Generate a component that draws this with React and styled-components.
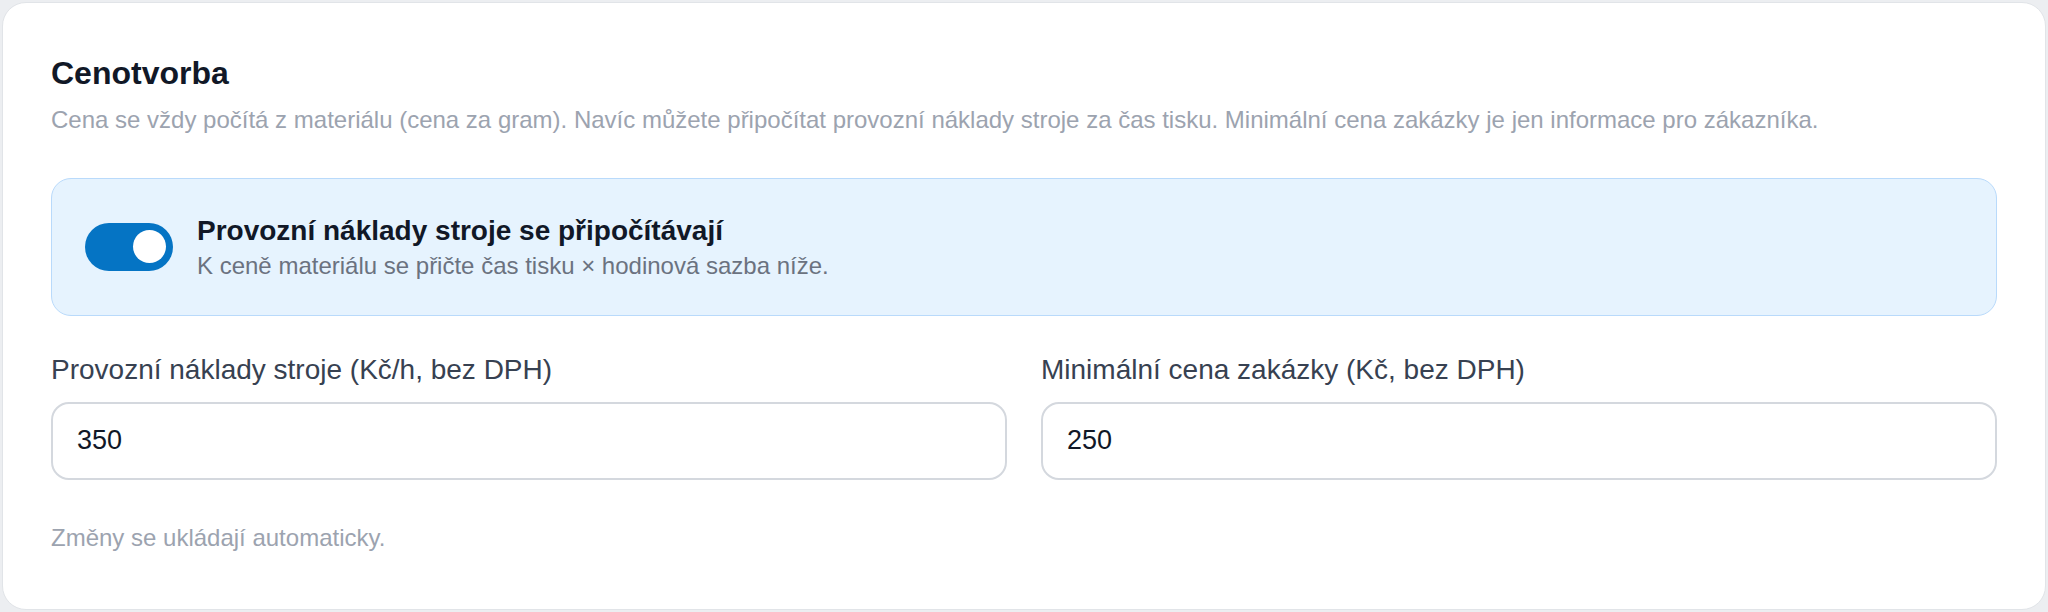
import React, { useState } from "react";
import styled, { createGlobalStyle } from "styled-components";

const GlobalStyle = createGlobalStyle`
  html, body {
    margin: 0;
    padding: 0;
    background: #eceef1;
  }
  body {
    font-family: "Liberation Sans", Arial, sans-serif;
    -webkit-font-smoothing: antialiased;
  }
  * { box-sizing: border-box; }
`;

const Page = styled.div`
  padding: 2px;
`;

const Card = styled.section`
  background: #ffffff;
  border: 1px solid #e1e4e8;
  border-radius: 24px;
  padding: 48px 48px 56px 48px;
  display: flex;
  flex-direction: column;
`;

const Title = styled.h2`
  margin: 0;
  font-size: 32px;
  line-height: 44px;
  font-weight: 700;
  color: #111827;
`;

const Description = styled.p`
  margin: 10px 0 0 0;
  font-size: 24px;
  line-height: 30px;
  color: #9ca3af;
`;

const ToggleBox = styled.div`
  margin-top: 43px;
  display: flex;
  align-items: center;
  gap: 24px;
  padding: 34px 33px;
  background: #e6f3fe;
  border: 1px solid #b9dafb;
  border-radius: 20px;
`;

const Switch = styled.button`
  flex: none;
  width: 88px;
  height: 48px;
  padding: 0 7.5px;
  border: none;
  border-radius: 24px;
  background: ${(p) => (p.$on ? "#0574c4" : "#cbd5e1")};
  display: flex;
  align-items: center;
  justify-content: ${(p) => (p.$on ? "flex-end" : "flex-start")};
  cursor: pointer;
`;

const Knob = styled.span`
  width: 33px;
  height: 33px;
  border-radius: 50%;
  background: #ffffff;
`;

const ToggleText = styled.div`
  display: flex;
  flex-direction: column;
  gap: 1.5px;
`;

const ToggleTitle = styled.div`
  font-size: 28px;
  line-height: 36px;
  font-weight: 700;
  color: #111827;
`;

const ToggleSub = styled.div`
  font-size: 24px;
  line-height: 30px;
  color: #6b7280;
`;

const Fields = styled.div`
  margin-top: 36px;
  display: grid;
  grid-template-columns: 1fr 1fr;
  column-gap: 34px;
`;

const Field = styled.label`
  display: flex;
  flex-direction: column;
  gap: 14px;
`;

const Label = styled.span`
  font-size: 28px;
  line-height: 36px;
  color: #374151;
`;

const Input = styled.input`
  width: 100%;
  height: 78px;
  padding: 0 24px;
  border: 2px solid #d4d8de;
  border-radius: 18px;
  background: #ffffff;
  font-family: "Liberation Sans", Arial, sans-serif;
  font-size: 27px;
  color: #111827;
  outline: none;
`;

const Footer = styled.p`
  margin: 43px 0 0 0;
  font-size: 24px;
  line-height: 30px;
  color: #9ca3af;
`;

export default function App() {
  const [on, setOn] = useState(true);
  return (
    <Page>
      <GlobalStyle />
      <Card>
        <Title>Cenotvorba</Title>
        <Description>
          Cena se vždy počítá z materiálu (cena za gram). Navíc můžete připočítat provozní náklady stroje za čas tisku. Minimální cena zakázky je jen informace pro zákazníka.
        </Description>
        <ToggleBox>
          <Switch $on={on} onClick={() => setOn(!on)} aria-pressed={on}>
            <Knob />
          </Switch>
          <ToggleText>
            <ToggleTitle>Provozní náklady stroje se připočítávají</ToggleTitle>
            <ToggleSub>K ceně materiálu se přičte čas tisku × hodinová sazba níže.</ToggleSub>
          </ToggleText>
        </ToggleBox>
        <Fields>
          <Field>
            <Label>Provozní náklady stroje (Kč/h, bez DPH)</Label>
            <Input type="text" defaultValue="350" />
          </Field>
          <Field>
            <Label>Minimální cena zakázky (Kč, bez DPH)</Label>
            <Input type="text" defaultValue="250" />
          </Field>
        </Fields>
        <Footer>Změny se ukládají automaticky.</Footer>
      </Card>
    </Page>
  );
}
